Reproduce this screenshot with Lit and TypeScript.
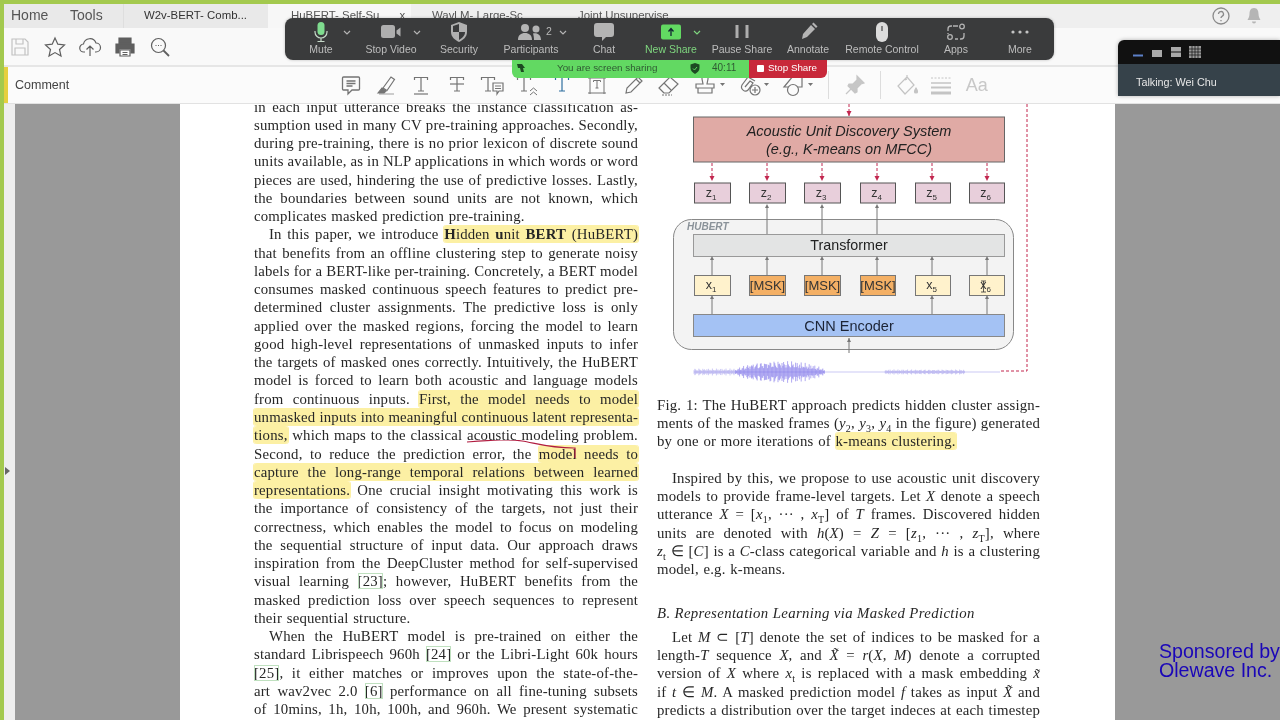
import { LitElement, html, css, svg } from "lit";
import { customElement } from "lit/decorators.js";

const ic = (w: number, body: unknown, cls = "") =>
  html`<svg class="ic ${cls}" width=${w} height="24" viewBox="0 0 ${w} 24" fill="none" stroke="currentColor" stroke-width="1.2">${body}</svg>`;
const caret = (x: number) => svg`<path d="M${x} 10h5l-2.500 3z" fill="currentColor" stroke="none"/>`;
const tee = (x = 12) => svg`<path d="M${x - 6.5} 7V4.500h13V7M${x} 4.500v13.500M${x - 3} 18h6"/>`;

const leftTools = [
  ic(24, svg`<path d="M4 4h13l3 3v13H4zM8 4v5h7V4M7 20v-7h10v7"/>`, "faint"),
  ic(24, svg`<path d="M12 3l2.800 6.200 6.700.8-5 4.500L18 21l-6-3.400L6 21l1.500-6.500-5-4.500 6.700-.8z"/>`),
  ic(24, svg`<path d="M7 17H6a4 4 0 0 1-.5-8 6.500 6.500 0 0 1 12.500-1 4.500 4.500 0 0 1 0 9h-1M12 21V11M8.500 14.500L12 11l3.500 3.500"/>`),
  ic(24, svg`<path d="M6 3h12v5H6zM3 9h18v9h-3v-4H6v4H3z" fill="currentColor"/><path d="M7 15h10v6H7z" fill="#fff"/><path d="M9.500 17.500h5M9.500 19.500h5" stroke-width="1"/>`),
  ic(24, svg`<circle cx="10.500" cy="10.500" r="7"/><path d="M15.500 15.500L21 21" stroke-width="1.800"/><path d="M7.500 10.500h1M10 10.500h1M12.500 10.500h1"/>`),
];

const tools1 = [
  ic(24, svg`<path d="M4.500 4h15a1 1 0 0 1 1 1v11a1 1 0 0 1-1 1H13l-4 4v-4H4.500a1 1 0 0 1-1-1V5a1 1 0 0 1 1-1zM7.500 8h9M7.500 10.500h9M7.500 13h6" stroke-width="1.300"/>`),
  ic(24, svg`<path d="M9 15L17 4l3.500 2.500-7.500 11z"/><path d="M5 21h15" stroke="#ccc" stroke-width="2"/><path d="M4 20l4-5 4 3-2 2z" fill="currentColor"/>`),
  ic(24, svg`${tee()}<path d="M5 21h14"/>`),
  ic(24, svg`${tee()}<path d="M5 11h14"/>`),
  ic(24, svg`${tee(8)}<path d="M13 10h10v8h-4l-2 3v-3h-4z" fill="#fbfbfb"/><path d="M15 13h6M15 15.500h6" stroke-width="1"/>`),
  ic(24, svg`${tee(9)}<path d="M15 18l3.500-3 3.500 3M15 22l3.500-3 3.500 3" stroke-width="1"/>`),
  ic(24, svg`${tee()}`, "blue"),
  ic(24, svg`<path d="M5 3v18M19 3v18M3 5h18M3 20h18" stroke-width="1"/><path d="M8.500 9V7.500h7V9M12 7.500v7.500M10.500 15h3" stroke-width="1"/>`),
  ic(24, svg`<path d="M5 20l1-5L17 4l4 4L10 19zM15 6l4 4"/>`),
  ic(24, svg`<path d="M8 20l-5-5L14 4l8 7-9 9zM8 10l7 7"/><path d="M6 22h10" stroke-width="1" stroke-dasharray="2 1"/>`),
];
const tools2 = [
  ic(34, svg`<path d="M9 3h6v3l-1 5h7v4H3v-4h7l-1-5zM5 15v5h14v-5"/>${caret(27)}`),
  ic(34, svg`<path d="M18 8l-7-4-6 8c-2 4 3 8 6 5l5-7-3-2-5 6"/><circle cx="18" cy="17" r="5" fill="#fbfbfb"/><path d="M18 14v6M15 17h6"/>${caret(27)}`),
  ic(34, svg`<path d="M3 14L12 3h9v11H3z"/><circle cx="12" cy="17" r="5.500" fill="#fbfbfb"/>${caret(27)}`),
];
const pin = ic(24, svg`<path d="M14 3l7 7-3 1-4 4 0 4-2 1-7-7 1-2h4l4-4z" fill="currentColor"/><path d="M8 16l-5 5"/>`, "faint2");
const fill = ic(24, svg`<path d="M12 4L3 13l7 8 9-9zM12 4V2M10 7l2-1"/><path d="M21 15c-2 3-2 5 0 5s2-2 0-5z" fill="currentColor"/>`, "faint3");
const lines = ic(24, svg`<path d="M2 5h20" stroke-dasharray="2 1.500" stroke-width="1"/><path d="M2 10h20" stroke-width="1.500"/><path d="M2 14.500h20" stroke-width="2"/><path d="M2 20h20" stroke-width="3"/>`, "faint3");

type Btn = { l: string; w: number; icon: unknown; chev?: number; green?: boolean; pad?: number };
const z = (body: unknown) =>
  html`<svg class="zi" width="40" height="24" viewBox="0 0 40 24">${body}</svg>`;
const btns: Btn[] = [
  { l: "Mute", w: 72, chev: 58, icon: z(svg`<rect x="16.500" y="2" width="7" height="13" rx="3.500" fill="#7fdc8f"/><path d="M14 11v1a6 6 0 0 0 12 0v-1M20 18v3M16.500 21.500h7" fill="none" stroke="#c5d8c8" stroke-width="1.200"/>`) },
  { l: "Stop Video", w: 68, chev: 56, icon: z(svg`<rect x="10" y="5" width="14" height="13" rx="2.500" fill="#aeaeae"/><path d="M25.500 10.500l4-3v9l-4-3z" fill="#aeaeae"/>`) },
  { l: "Security", w: 68, icon: z(svg`<path d="M20 2l8 3v7c0 5-4 8-8 10-4-2-8-5-8-10V5z" fill="#b0b0b0"/><path d="M20 4v8h-6V6zM20 12h6c0 4-3 6-6 8z" fill="#3a3b3c"/>`) },
  { l: "Participants", w: 76, chev: 66, icon: html`<svg class="zi" width="60" height="24" viewBox="0 0 60 24"><g fill="#b4b4b4"><circle cx="24" cy="8" r="4"/><circle cx="35" cy="9" r="3.500"/><path d="M17 20c0-5 3-7 7-7s7 2 7 7zM32 13.500c4-1 8 1 8 6.500h-7c0-3-.500-5-1-6.500z"/></g><text x="45" y="15" font-size="10.500" fill="#b8b8b8" font-family="Liberation Sans, sans-serif">2</text></svg>` },
  { l: "Chat", w: 70, icon: z(svg`<path d="M13 3h14a3 3 0 0 1 3 3v8a3 3 0 0 1-3 3h-5l-4 4v-4h-5a3 3 0 0 1-3-3V6a3 3 0 0 1 3-3z" fill="#b4b4b4"/>`) },
  { l: "New Share", w: 64, chev: 54, green: true, icon: z(svg`<rect x="10" y="4.500" width="20" height="15" rx="2" fill="#62d962"/><path d="M20 16V9M17.500 11.500L20 8.500l2.500 3" stroke="#123" stroke-width="1.300" fill="none"/>`) },
  { l: "Pause Share", w: 78, icon: z(svg`<rect x="13.500" y="5" width="3" height="13" fill="#aeaeae"/><rect x="23.500" y="5" width="3" height="13" fill="#aeaeae"/>`) },
  { l: "Annotate", w: 54, icon: z(svg`<path d="M14 19l1-5 8-9 4 4-8 8zM24 4l1.500-1.500 4 4L28 8z" fill="#b4b4b4"/>`) },
  { l: "Remote Control", w: 94, icon: z(svg`<rect x="14" y="2" width="12" height="20" rx="6" fill="#dcdcdc"/><path d="M20 6v5" stroke="#666" stroke-width="1.500"/>`) },
  { l: "Apps", w: 54, icon: z(svg`<path d="M16 6h-1a3 3 0 0 0-3 3v2M24 19h1a3 3 0 0 0 3-3v-3M17 6h5M12 13v1M22 19h-3" fill="none" stroke="#b4b4b4" stroke-width="1.300"/><circle cx="26" cy="6.500" r="2.300" fill="none" stroke="#b4b4b4" stroke-width="1.300"/><circle cx="14" cy="17" r="2.300" fill="none" stroke="#b4b4b4" stroke-width="1.300"/>`) },
  { l: "More", w: 71, pad: 3, icon: z(svg`<circle cx="13" cy="12" r="1.600" fill="#c4c4c4"/><circle cx="20" cy="12" r="1.600" fill="#c4c4c4"/><circle cx="27" cy="12" r="1.600" fill="#c4c4c4"/>`) },
];

const hl = (t: unknown) => html`<span class="hl">${t}</span>`;
const cite = (t: string) => html`<span class="cite">${t}</span>`;
const sb = (t: string) => html`<sub>${t}</sub>`;

type Line = { t: unknown; e?: boolean; i?: boolean };
const leftLines: Line[] = [
  { t: "in each input utterance breaks the instance classification as-" },
  { t: "sumption used in many CV pre-training approaches. Secondly," },
  { t: "during pre-training, there is no prior lexicon of discrete sound" },
  { t: "units available, as in NLP applications in which words or word" },
  { t: "pieces are used, hindering the use of predictive losses. Lastly," },
  { t: "the boundaries between sound units are not known, which" },
  { t: "complicates masked prediction pre-training.", e: true },
  { i: true, t: html`In this paper, we introduce ${hl(html`<b>H</b>idden <b>u</b>nit <b>BERT</b> (HuBERT)`)}` },
  { t: "that benefits from an offline clustering step to generate noisy" },
  { t: "labels for a BERT-like per-training. Concretely, a BERT model" },
  { t: "consumes masked continuous speech features to predict pre-" },
  { t: "determined cluster assignments. The predictive loss is only" },
  { t: "applied over the masked regions, forcing the model to learn" },
  { t: "good high-level representations of unmasked inputs to infer" },
  { t: "the targets of masked ones correctly. Intuitively, the HuBERT" },
  { t: "model is forced to learn both acoustic and language models" },
  { t: html`from continuous inputs. ${hl("First, the model needs to model")}` },
  { t: hl("unmasked inputs into meaningful continuous latent representa-") },
  { t: html`${hl("tions,")} which maps to the classical acoustic modeling problem.` },
  { t: html`Second, to reduce the prediction error, the ${hl("model needs to")}` },
  { t: hl("capture the long-range temporal relations between learned") },
  { t: html`${hl("representations.")} One crucial insight motivating this work is` },
  { t: "the importance of consistency of the targets, not just their" },
  { t: "correctness, which enables the model to focus on modeling" },
  { t: "the sequential structure of input data. Our approach draws" },
  { t: "inspiration from the DeepCluster method for self-supervised" },
  { t: html`visual learning ${cite("[23]")}; however, HuBERT benefits from the` },
  { t: "masked prediction loss over speech sequences to represent" },
  { t: "their sequential structure.", e: true },
  { i: true, t: "When the HuBERT model is pre-trained on either the" },
  { t: html`standard Librispeech 960h ${cite("[24]")} or the Libri-Light 60k hours` },
  { t: html`${cite("[25]")}, it either matches or improves upon the state-of-the-` },
  { t: html`art wav2vec 2.0 ${cite("[6]")} performance on all fine-tuning subsets` },
  { t: "of 10mins, 1h, 10h, 100h, and 960h. We present systematic" },
];

const caption: Line[] = [
  { t: "Fig. 1: The HuBERT approach predicts hidden cluster assign-" },
  { t: html`ments of the masked frames (<i>y</i>${sb("2")}, <i>y</i>${sb("3")}, <i>y</i>${sb("4")} in the figure) generated` },
  { e: true, t: html`by one or more iterations of ${hl("k-means clustering.")}` },
];
const para1: Line[] = [
  { i: true, t: "Inspired by this, we propose to use acoustic unit discovery" },
  { t: html`models to provide frame-level targets. Let <i>X</i> denote a speech` },
  { t: html`utterance <i>X</i> = [<i>x</i>${sb("1")}, ··· , <i>x</i>${sb("T")}] of <i>T</i> frames. Discovered hidden` },
  { t: html`units are denoted with <i>h</i>(<i>X</i>) = <i>Z</i> = [<i>z</i>${sb("1")}, ··· , <i>z</i>${sb("T")}], where` },
  { t: html`<i>z</i>${sb("t")} ∈ [<i>C</i>] is a <i>C</i>-class categorical variable and <i>h</i> is a clustering` },
  { e: true, t: "model, e.g. k-means." },
];
const para2: Line[] = [
  { i: true, t: html`Let <i>M</i> ⊂ [<i>T</i>] denote the set of indices to be masked for a` },
  { t: html`length-<i>T</i> sequence <i>X</i>, and <i>X̃</i> = <i>r</i>(<i>X</i>, <i>M</i>) denote a corrupted` },
  { t: html`version of <i>X</i> where <i>x</i>${sb("t")} is replaced with a mask embedding <i>x̃</i>` },
  { t: html`if <i>t</i> ∈ <i>M</i>. A masked prediction model <i>f</i> takes as input <i>X̃</i> and` },
  { t: "predicts a distribution over the target indeces at each timestep" },
];

const lineT = (ls: Line[]) =>
  ls.map((l) => html`<div class="l ${l.e ? "end" : ""} ${l.i ? "ind" : ""}">${l.t}</div>`);

const cols = [694, 749, 804, 860, 915, 969];
const colW = [36, 36, 36, 35, 35, 35];
const arrowX = [712, 767, 822, 877, 932, 987];

function waveParts() {
  let strong = "";
  let pale = "M694 372H1000";
  for (let x = 694; x < 1000; x += 0.8) {
    const j = 0.35 + 0.65 * Math.abs(Math.sin(x * 2.3) * Math.cos(x * 0.71));
    if (x < 735) {
      pale += `M${x} ${372 - 3.5 * j}V${372 + 3.5 * j}`;
    } else if (x < 825) {
      const env = 1.5 + 10 * Math.pow(Math.sin(((x - 735) / 90) * Math.PI), 0.6);
      strong += `M${x} ${372 - env * j}V${372 + env * j}`;
    } else if (x > 885 && x < 965) {
      pale += `M${x} ${372 - 2.6 * j}V${372 + 2.6 * j}`;
    }
  }
  return { strong, pale };
}
const wp = waveParts();

const figure = svg`
  <svg class="fig" width="383" height="292" viewBox="657 104 383 292">
    <path d="M849 104V116M1027 104V371H1000" stroke="#c2274f" stroke-width="1" stroke-dasharray="3 2" fill="none"/>
    <path d="M846.500 111h5l-2.500 5z" fill="#c2274f"/>
    <rect x="693.500" y="117" width="311" height="45" fill="#e0aaa5" stroke="#666"/>
    <text x="849" y="136" class="ar it" text-anchor="middle" font-size="14.500">Acoustic Unit Discovery System</text>
    <text x="849" y="154" class="ar it" text-anchor="middle" font-size="14.500">(e.g., K-means on MFCC)</text>
    ${arrowX.map((x) => svg`
      <path d="M${x} 163V177" stroke="#c2274f" stroke-dasharray="3 2"/>
      <path d="M${x - 2.5} 176h5l-2.500 5z" fill="#c2274f"/>`)}
    ${cols.map((x, i) => svg`
      <rect x=${x + 0.5} y="183" width=${colW[i]} height="20" fill="#e8cfdb" stroke="#555"/>
      <text x=${x + colW[i] / 2 - 1} y="197" class="ar" text-anchor="middle" font-size="12.500" fill="#333">z<tspan font-size="8" dy="3">${i + 1}</tspan></text>`)}
    <rect x="673.500" y="219.500" width="340" height="130" rx="18" fill="#f3f3f3" stroke="#888"/>
    <text x="687" y="230" class="ar" font-size="10" font-weight="700" font-style="italic" fill="#8a9299">HUBERT</text>
    <rect x="693.500" y="234.500" width="311" height="22" fill="#e3e4e4" stroke="#999"/>
    <text x="849" y="250" class="ar" text-anchor="middle" font-size="14.300" fill="#222">Transformer</text>
    <g stroke="#777" fill="none">
      <path d="M767 234V207M822 234V207M877 234V207"/>
      <path d="M712 275V258M767 275V258M822 275V258M877 275V258M932 275V258M987 275V258"/>
      <path d="M712 314V298M932 314V298M987 314V298"/>
      <path d="M849 353V338"/>
    </g>
    <g fill="#777">
      ${[767, 822, 877].map((x) => svg`<path d="M${x - 2} 208h4l-2-4z"/>`)}
      ${arrowX.map((x) => svg`<path d="M${x - 2} 260h4l-2-4z"/>`)}
      ${[712, 932, 987].map((x) => svg`<path d="M${x - 2} 299h4l-2-4z"/>`)}
      <path d="M847 342h4l-2-4z"/>
    </g>
    ${cols.map((x, i) => {
      const mask = i > 0 && i < 4;
      return svg`
      <rect x=${x + 0.5} y="275.500" width=${colW[i]} height="20" fill=${mask ? "#f4b065" : "#fff2cc"} stroke="#777"/>
      ${mask
        ? svg`<text x=${x + colW[i] / 2 + 0.5} y="290" class="ar" text-anchor="middle" font-size="13" fill="#333">[MSK]</text>`
        : svg`<text x=${x + colW[i] / 2 - 1} y="289" class="ar" text-anchor="middle" font-size="12.500" fill="#333">x<tspan font-size="8" dy="3">${i + 1}</tspan></text>`}`;
    })}
    <path d="M981 281h5M981 292h5M983.500 281v11" stroke="#333" fill="none" stroke-width=".8"/>
    <rect x="693.500" y="314.500" width="311" height="22" fill="#a4c2f4" stroke="#888"/>
    <text x="849" y="330.500" class="ar" text-anchor="middle" font-size="14.500" fill="#1c2436">CNN Encoder</text>
    <path d=${wp.pale} stroke="#a9a4ec" stroke-width=".6" fill="none"/>
    <path d=${wp.strong} stroke="#7a6ee8" stroke-width=".6" fill="none"/>
  </svg>`;

@customElement("app-root")
export class AppRoot extends LitElement {
  static styles = css`
    :host { display: block; width: 1280px; height: 720px; overflow: hidden; position: relative; font-family: "Liberation Sans", Arial, sans-serif; filter: blur(0.3px); }
    .frame { height: 720px; box-sizing: border-box; border-top: 4px solid #a3c94e; border-left: 4px solid #a3c94e; display: flex; flex-direction: column; background: #fbfbfb; }
    .tabs { height: 24px; flex: none; display: flex; background: #efefef; color: #555; font-size: 11.4px; line-height: 22px; white-space: nowrap; }
    .tabs .home { width: 264px; flex: none; background: #e9e9e9; display: flex; }
    .menu { font-size: 14px; color: #555; padding-left: 7px; width: 59px; }
    .menu + .menu { width: 53px; padding-left: 0; border-right: 1px solid #dedede; }
    .w2v { padding-left: 20px; color: #333; }
    .active { width: 143px; flex: none; background: #f7f7f7; padding-left: 23px; box-sizing: border-box; display: flex; gap: 20px; }
    .active span { flex: none; }
    .tab2 { width: 167px; padding-left: 21px; box-sizing: border-box; flex: none; }
    .tab3 { width: 120px; flex: none; }
    .spacer { flex: 1; }
    .topright { display: flex; gap: 13px; align-items: center; padding-right: 16px; color: #8a8a8a; }
    .tools { height: 37px; flex: none; background: #f9f9f9; border-bottom: 2px solid #e6e6e6; display: flex; align-items: center; gap: 11px; padding-left: 4px; color: #5f5f5f; }
    .ic { display: block; flex: none; }
    .faint { color: #c2c2c2; }
    .faint2 { color: #c6c6c6; }
    .faint3 { color: #c4c4c4; }
    .blue { color: #2f6f9f; }
    .comment { height: 36px; flex: none; background: #fbfbfb; border-bottom: 1px solid #e2e2e2; display: flex; align-items: center; color: #747474; }
    .stripe { width: 4px; align-self: stretch; background: #e6cf3f; flex: none; }
    .clabel { width: 331px; flex: none; padding-left: 7px; box-sizing: border-box; font-size: 12.5px; color: #444; }
    .g1 { display: flex; gap: 11.2px; }
    .g2 { display: flex; gap: 10px; margin-left: 13px; }
    .sep { width: 1px; height: 28px; background: #ddd; flex: none; }
    .sep1 { margin-left: 13px; }
    .after { margin-left: 14px; }
    .lines { margin-left: 10px; }
    .aa { font-size: 18px; color: #c8c8c8; width: 24px; text-align: center; flex: none; margin-left: 12px; }
    .doc { flex: 1; min-height: 0; display: flex; overflow: hidden; background: #999; }
    .gutter { width: 11px; flex: none; background: #eee; display: flex; align-items: center; padding-top: 118px; box-sizing: border-box; }
    .tri { width: 0; height: 0; border-left: 5px solid #666; border-top: 4px solid transparent; border-bottom: 4px solid transparent; margin-left: 1px; }
    .gray { flex: none; width: 165px; background: #999; }
    .gray.grow { flex: 1; }
    .page { width: 935px; flex: none; background: #fff; display: flex; gap: 19px; padding-left: 74px; box-sizing: border-box; overflow: hidden;
      font-family: "Liberation Serif", "Times New Roman", serif; font-size: 14.8px; letter-spacing: 0.18px; color: #262626; }
    .left { width: 384px; flex: none; margin-top: -6.5px; position: relative; }
    .left .l { height: 18.27px; line-height: 18.27px; }
    .right { width: 383px; flex: none; }
    .l { height: 18.2px; line-height: 18.2px; white-space: nowrap; text-align: justify; text-align-last: justify; }
    .end { text-align-last: left; word-spacing: 0.8px; }
    .ind { padding-left: 15px; }
    b { font-weight: 700; }
    sub { font-size: 10px; line-height: 0; }
    .hl { background: #fcf0a4; padding: 1px 0; border-radius: 3px; box-shadow: 1px 0 0 #fcf0a4, -1px 0 0 #fcf0a4; }
    .cite { outline: 1px solid #bfe0bf; outline-offset: -1px; }
    .fig { display: block; }
    .ar { font-family: "Liberation Sans", Arial, sans-serif; letter-spacing: 0; }
    .it { font-style: italic; fill: #222; }
    .p1 { margin-top: 18.4px; }
    .h { margin-top: 26px; height: 18.2px; line-height: 18.2px; font-style: italic; letter-spacing: 0.36px; }
    .p2 { margin-top: 5.8px; }
    .mark { position: absolute; left: 210px; top: 342px; pointer-events: none; }
    .zoombar { position: absolute; left: 285px; top: 18px; width: 769px; height: 42px; background: #3a3b3c; border-radius: 8px; display: flex; box-shadow: 0 0 3px rgba(0,0,0,.25); }
    .zb { position: relative; flex: none; height: 42px; box-sizing: border-box; padding-top: 2px; display: flex; flex-direction: column; align-items: center; color: #bdbdbd; font-size: 10.5px; }
    .zb.g { color: #7fd67f; }
    .zi { display: block; height: 24px; }
    .zl { line-height: 12px; margin-top: -1px; white-space: nowrap; }
    .chev { position: absolute; top: 12px; width: 8px; height: 5px; }
    .banner { position: absolute; left: 512px; top: 60px; width: 315px; height: 18px; display: flex; border-radius: 0 0 6px 6px; overflow: hidden; font-size: 9.8px; line-height: 16px; }
    .bg { width: 237px; flex: none; background: #62d962; color: #2f5a33; display: flex; align-items: center; box-sizing: border-box; padding: 0 0 2px 4px; }
    .bmsg { margin-left: 31px; width: 133px; white-space: nowrap; }
    .btime { font-size: 10px; margin-left: 12px; }
    .br { flex: 1; background: #c8283a; color: #fff; display: flex; align-items: center; padding: 0 0 2px 8px; gap: 4px; }
    .sq { width: 7px; height: 7px; background: #fff; border-radius: 1px; }
    .gallery { position: absolute; left: 1118px; top: 40px; width: 162px; height: 56px; border-radius: 6px 0 0 0; overflow: hidden; box-shadow: 0 0 4px rgba(0,0,0,.3); }
    .gt { height: 24px; background: #111; display: flex; align-items: center; }
    .gb { height: 32px; background: #36424a; color: #e6e6e6; font-size: 10.8px; line-height: 36px; padding-left: 18px; }
    .sponsor { position: absolute; left: 1159px; top: 642px; color: #1a06b8; font-size: 19.6px; line-height: 18.5px; white-space: nowrap; }
  `;

  render() {
    return html`
      <div class="frame">
        <div class="tabs">
          <div class="home">
            <div class="menu">Home</div><div class="menu">Tools</div>
            <div class="w2v">W2v-BERT- Comb...</div>
          </div>
          <div class="active"><span>HuBERT- Self-Su</span><span>x</span></div>
          <div class="tab2">Wavl M- Large-Sc</div>
          <div class="tab3">Joint Unsupervise</div>
          <div class="spacer"></div>
          <div class="topright">
            <svg width="20" height="20" viewBox="0 0 20 20" fill="none" stroke="currentColor" stroke-width="1.300"><circle cx="10" cy="10" r="8"/><path d="M7.500 8a2.500 2.500 0 1 1 3.500 2.300c-.8.400-1 .8-1 1.700M10 14v1.200"/></svg>
            <svg width="20" height="20" viewBox="0 0 20 20" fill="#b5b5b5"><path d="M10 2c-3.500 0-4.500 3-4.500 6 0 3-1.500 5-2 6h13c-.5-1-2-3-2-6 0-3-1-6-4.500-6zM8 15.500h4a2 2 0 0 1-4 0z"/></svg>
          </div>
        </div>
        <div class="tools">${leftTools}</div>
        <div class="comment">
          <div class="stripe"></div>
          <div class="clabel">Comment</div>
          <div class="g1">${tools1}</div>
          <div class="g2">${tools2}</div>
          <div class="sep sep1"></div>
          <div class="after">${pin}</div>
          <div class="sep sep1"></div>
          <div class="after faint3">${fill}</div>
          <div class="lines faint3">${lines}</div>
          <div class="aa">Aa</div>
        </div>
        <div class="doc">
          <div class="gutter"><div class="tri"></div></div>
          <div class="gray"></div>
          <div class="page">
            <div class="left">
              ${lineT(leftLines)}
              <svg class="mark" width="120" height="30" viewBox="0 0 120 30" fill="none" stroke="#b01c40" stroke-width="1.200">
                <path d="M3 2C30 0 45-1 58 1S85 8 110 8H111V18"/>
              </svg>
            </div>
            <div class="right">
              ${figure}
              <div>${lineT(caption)}</div>
              <div class="p1">${lineT(para1)}</div>
              <div class="h">B. Representation Learning via Masked Prediction</div>
              <div class="p2">${lineT(para2)}</div>
            </div>
          </div>
          <div class="gray grow"></div>
        </div>
      </div>

      <div class="zoombar">
        ${btns.map((b) => html`
          <div class="zb ${b.green ? "g" : ""}" style="width:${b.w}px;padding-left:${b.pad ?? 0}px">
            ${b.icon}
            <div class="zl">${b.l}</div>
            ${b.chev !== undefined
              ? html`<svg class="chev" style="left:${b.chev}px" viewBox="0 0 8 5" fill="none" stroke=${b.green ? "#7fd67f" : "#b4b4b4"} stroke-width="1.200"><path d="M1 1l3 3 3-3"/></svg>`
              : ""}
          </div>`)}
      </div>

      <div class="banner">
        <div class="bg">
          <svg width="10" height="10" viewBox="0 0 10 10" fill="#1d4a22"><path d="M1 1h5l3 4H7l1 4H5L4 5H2z"/></svg>
          <span class="bmsg">You are screen sharing</span>
          <svg width="10" height="11" viewBox="0 0 10 11"><path d="M5 0l4.500 1.500V5c0 3-2 4.500-4.500 6C2.500 9.500.5 8 .5 5V1.500z" fill="#1d4a22"/><path d="M3 5.500l1.500 1.500L7 4" stroke="#62d962" fill="none"/></svg>
          <span class="btime">40:11</span>
        </div>
        <div class="br"><span class="sq"></span>Stop Share</div>
      </div>

      <div class="gallery">
        <div class="gt">
          <svg width="90" height="24" viewBox="1118 40 90 24">
            <rect x="1133" y="54.500" width="10" height="2" fill="#5c80c8"/>
            <rect x="1152" y="50" width="10" height="7" fill="#aaa"/>
            <rect x="1171" y="47" width="10" height="4.500" fill="#aaa"/><rect x="1171" y="52.500" width="10" height="4.500" fill="#aaa"/>
            <path d="M1189 46h12v12h-12z" fill="#999"/><path d="M1192 46v12M1195 46v12M1198 46v12M1189 49h12M1189 52h12M1189 55h12" stroke="#111" stroke-width=".7"/>
          </svg>
        </div>
        <div class="gb">Talking: Wei Chu</div>
      </div>

      <div class="sponsor">Sponsored by<br />Olewave Inc.</div>
    `;
  }
}
